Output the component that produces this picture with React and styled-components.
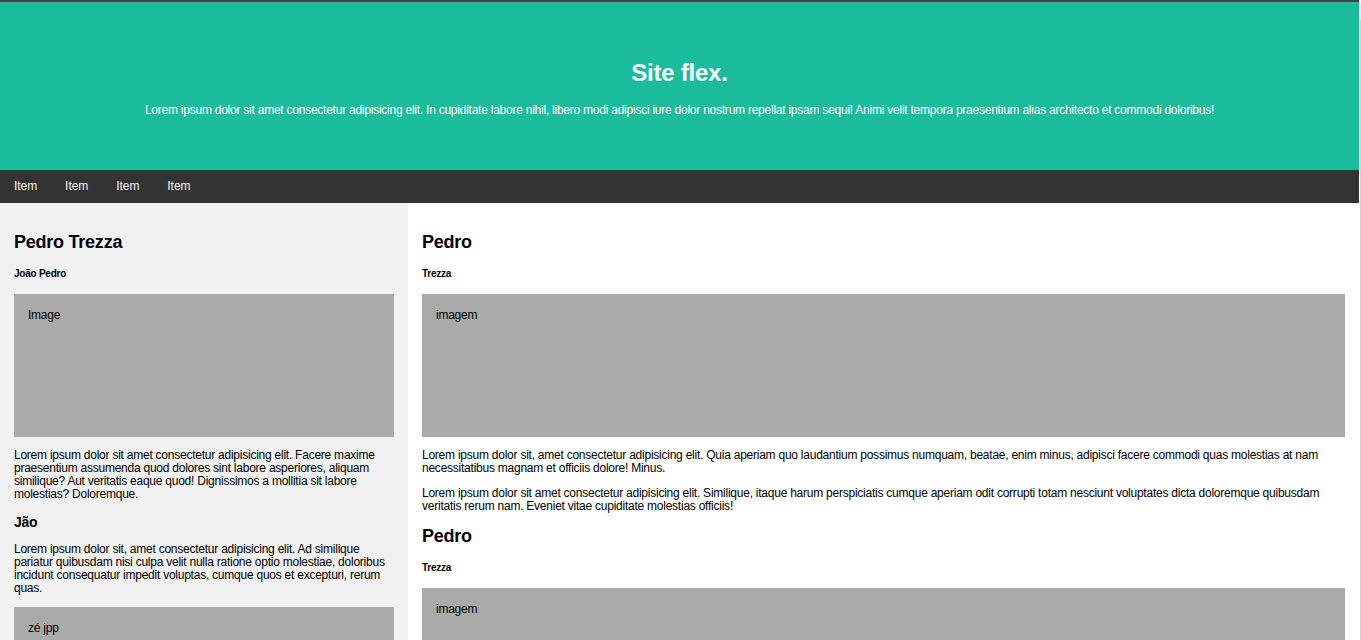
import React from 'react';
import styled, { createGlobalStyle } from 'styled-components';

const GlobalStyle = createGlobalStyle`
  * {
    box-sizing: border-box;
  }

  html, body {
    margin: 0;
    padding: 0;
    background: #ffffff;
  }

  body {
    font-family: "Liberation Sans", Arial, sans-serif;
    font-size: 12px;
    letter-spacing: -0.02em;
    color: #000;
  }
`;

const Page = styled.div`
  width: calc(100% - 2px);
  border-top: 2px solid #3f4448;
`;

const ScrollEdge = styled.div`
  position: fixed;
  top: 20px;
  right: 0;
  bottom: 0;
  width: 1px;
  background: #cfcfcf;
`;

const Header = styled.header`
  background: #1abc9c;
  color: #ffffff;
  text-align: center;
  padding: 41px 20px;
  height: 168px;
`;

const SiteTitle = styled.h1`
  font-size: 24px;
  margin: 16px 0;
`;

const Lead = styled.p`
  margin: 12px 0;
`;

const Nav = styled.nav`
  display: flex;
  background: #333333;
  height: 33px;
`;

const NavItem = styled.a`
  display: block;
  color: #f2f2f2;
  text-decoration: none;
  padding: 10px 14px;
  line-height: 13.8px;
  letter-spacing: -0.005em;
`;

const Row = styled.div`
  display: flex;
`;

const Side = styled.aside`
  flex: 0 0 408px;
  background: #f1f1f1;
  padding: 14px;
`;

const Main = styled.main`
  flex: 1;
  background: #ffffff;
  padding: 14px;
`;

const Title = styled.h2`
  font-size: 18px;
  margin: 15px 0;

  & + & {
    margin-top: 13px;
  }
`;

const Sub = styled.h5`
  font-size: 10px;
  margin: 14px 0 15px;
`;

const Section = styled.h3`
  font-size: 14px;
  margin: 13px 0;
`;

const Text = styled.p`
  margin: 12px 0;
  line-height: 13px;
`;

const LateTitle = styled(Title)`
  margin-top: 13px;
`;

const FakeImg = styled.div`
  background: #aaaaaa;
  height: 143px;
  padding: 14px 14px;
  font-size: 12px;
`;

const App = () => {
  return (
    <>
      <GlobalStyle />
      <Page>
        <Header>
          <SiteTitle>Site flex.</SiteTitle>
          <Lead>
            Lorem ipsum dolor sit amet consectetur adipisicing elit. In cupiditate labore nihil, libero modi adipisci iure dolor nostrum repellat ipsam sequi! Animi velit tempora praesentium alias architecto et commodi doloribus!
          </Lead>
        </Header>

        <Nav>
          <NavItem href="#">Item</NavItem>
          <NavItem href="#">Item</NavItem>
          <NavItem href="#">Item</NavItem>
          <NavItem href="#">Item</NavItem>
        </Nav>

        <Row>
          <Side>
            <Title>Pedro Trezza</Title>
            <Sub>João Pedro</Sub>
            <FakeImg>Image</FakeImg>
            <Text>
              Lorem ipsum dolor sit amet consectetur adipisicing elit. Facere maxime praesentium assumenda quod dolores sint labore asperiores, aliquam similique? Aut veritatis eaque quod! Dignissimos a mollitia sit labore molestias? Doloremque.
            </Text>
            <Section>Jão</Section>
            <Text>
              Lorem ipsum dolor sit, amet consectetur adipisicing elit. Ad similique pariatur quibusdam nisi culpa velit nulla ratione optio molestiae, doloribus incidunt consequatur impedit voluptas, cumque quos et excepturi, rerum quas.
            </Text>
            <FakeImg>zé jpp</FakeImg>
          </Side>

          <Main>
            <Title>Pedro</Title>
            <Sub>Trezza</Sub>
            <FakeImg>imagem</FakeImg>
            <Text>
              Lorem ipsum dolor sit, amet consectetur adipisicing elit. Quia aperiam quo laudantium possimus numquam, beatae, enim minus, adipisci facere commodi quas molestias at nam necessitatibus magnam et officiis dolore! Minus.
            </Text>
            <Text>
              Lorem ipsum dolor sit amet consectetur adipisicing elit. Similique, itaque harum perspiciatis cumque aperiam odit corrupti totam nesciunt voluptates dicta doloremque quibusdam veritatis rerum nam. Eveniet vitae cupiditate molestias officiis!
            </Text>
            <LateTitle>Pedro</LateTitle>
            <Sub>Trezza</Sub>
            <FakeImg>imagem</FakeImg>
          </Main>
        </Row>
        <ScrollEdge />
      </Page>
    </>
  );
};

export default App;
